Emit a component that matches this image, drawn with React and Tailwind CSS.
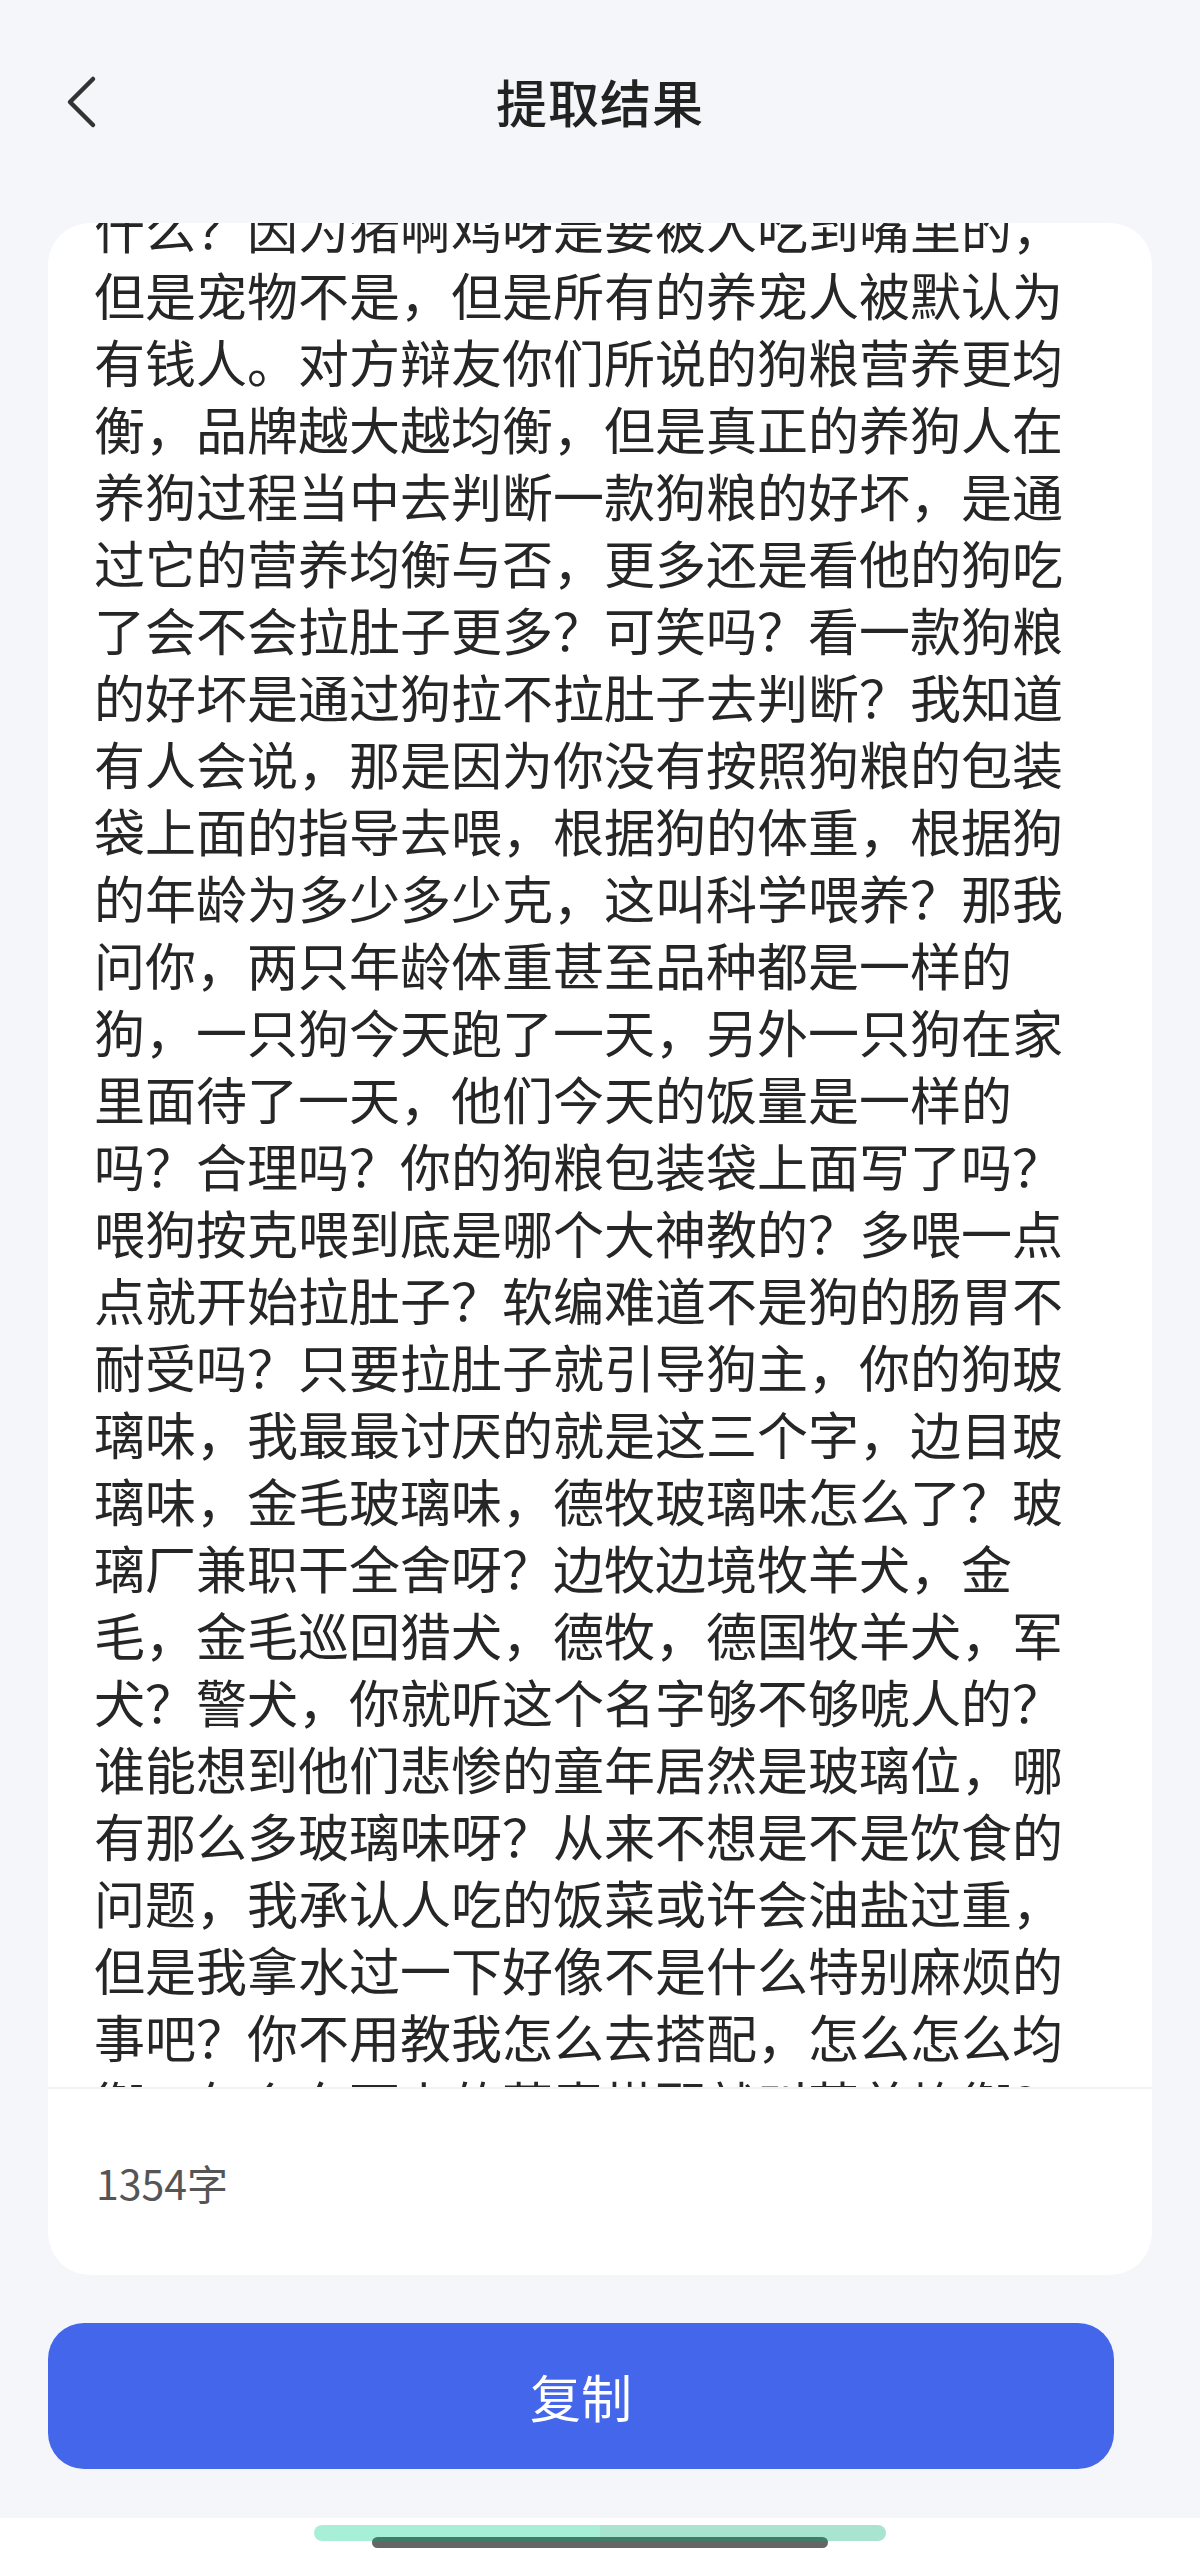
import { ChevronLeft } from "lucide-react";

const lines = [
  "什么？因为猪啊鸡呀是要被人吃到嘴里的，",
  "但是宠物不是，但是所有的养宠人被默认为",
  "有钱人。对方辩友你们所说的狗粮营养更均",
  "衡，品牌越大越均衡，但是真正的养狗人在",
  "养狗过程当中去判断一款狗粮的好坏，是通",
  "过它的营养均衡与否，更多还是看他的狗吃",
  "了会不会拉肚子更多？可笑吗？看一款狗粮",
  "的好坏是通过狗拉不拉肚子去判断？我知道",
  "有人会说，那是因为你没有按照狗粮的包装",
  "袋上面的指导去喂，根据狗的体重，根据狗",
  "的年龄为多少多少克，这叫科学喂养？那我",
  "问你，两只年龄体重甚至品种都是一样的",
  "狗，一只狗今天跑了一天，另外一只狗在家",
  "里面待了一天，他们今天的饭量是一样的",
  "吗？合理吗？你的狗粮包装袋上面写了吗？",
  "喂狗按克喂到底是哪个大神教的？多喂一点",
  "点就开始拉肚子？软编难道不是狗的肠胃不",
  "耐受吗？只要拉肚子就引导狗主，你的狗玻",
  "璃味，我最最讨厌的就是这三个字，边目玻",
  "璃味，金毛玻璃味，德牧玻璃味怎么了？玻",
  "璃厂兼职干全舍呀？边牧边境牧羊犬，金",
  "毛，金毛巡回猎犬，德牧，德国牧羊犬，军",
  "犬？警犬，你就听这个名字够不够唬人的？",
  "谁能想到他们悲惨的童年居然是玻璃位，哪",
  "有那么多玻璃味呀？从来不想是不是饮食的",
  "问题，我承认人吃的饭菜或许会油盐过重，",
  "但是我拿水过一下好像不是什么特别麻烦的",
  "事吧？你不用教我怎么去搭配，怎么怎么均",
  "衡，怎么东西上的荤素搭配就叫营养均衡？",
];

export default function App() {
  return (
    <div className="w-[1200px] h-[2566px] bg-[#f4f6fa] flex flex-col font-['Noto_Sans_CJK_SC','Noto_Sans',sans-serif] overflow-hidden">
      {/* Header */}
      <div className="relative h-[202px] flex items-center justify-center shrink-0">
        <button className="absolute left-[62px] top-[72px] w-[44px] h-[60px] flex items-center justify-center text-[#333333]">
          <svg width="40" height="56" viewBox="0 0 40 56" fill="none">
            <path
              d="M29 5 L6 28 L29 51"
              stroke="currentColor"
              strokeWidth="4.5"
              strokeLinecap="round"
              strokeLinejoin="round"
            />
          </svg>
        </button>
        <h1 className="text-[51px] leading-none font-medium text-[#222222] tracking-[1px]">
          提取结果
        </h1>
      </div>

      {/* Result card */}
      <div className="mx-[48px] mt-[21px] h-[2052px] shrink-0 bg-white rounded-[42px] flex flex-col overflow-hidden">
        <div className="h-[1864px] overflow-hidden shrink-0">
          <div className="-mt-[29px] px-[46px] text-[51px] leading-[67px] text-[#262626]">
            {lines.map((line, i) => (
              <div key={i} className="whitespace-nowrap">
                {line}
              </div>
            ))}
          </div>
        </div>
        <div className="h-[2px] bg-[#f1f2f4] shrink-0" />
        <div className="flex-1 flex items-center px-[48px]">
          <span className="text-[41px] leading-none text-[#555555]">1354字</span>
        </div>
      </div>

      {/* Copy button */}
      <button className="mt-[48px] ml-[48px] w-[1066px] h-[146px] shrink-0 rounded-[36px] bg-[#4466ea] text-white text-[51px] leading-none flex items-center justify-center">
        复制
      </button>

      <div className="flex-1" />

      {/* System nav bar */}
      <div className="relative h-[48px] bg-white shrink-0">
        <div className="absolute left-[314px] top-[7px] w-[572px] h-[16px] rounded-full bg-[linear-gradient(to_right,#a8efd8_50%,#a9e4d0_50%)]" />
        <div className="absolute left-[372px] top-[19px] w-[456px] h-[11px] rounded-full bg-[linear-gradient(to_bottom,#3f7f6a_38%,#666666_38%)]" />
      </div>
    </div>
  );
}
